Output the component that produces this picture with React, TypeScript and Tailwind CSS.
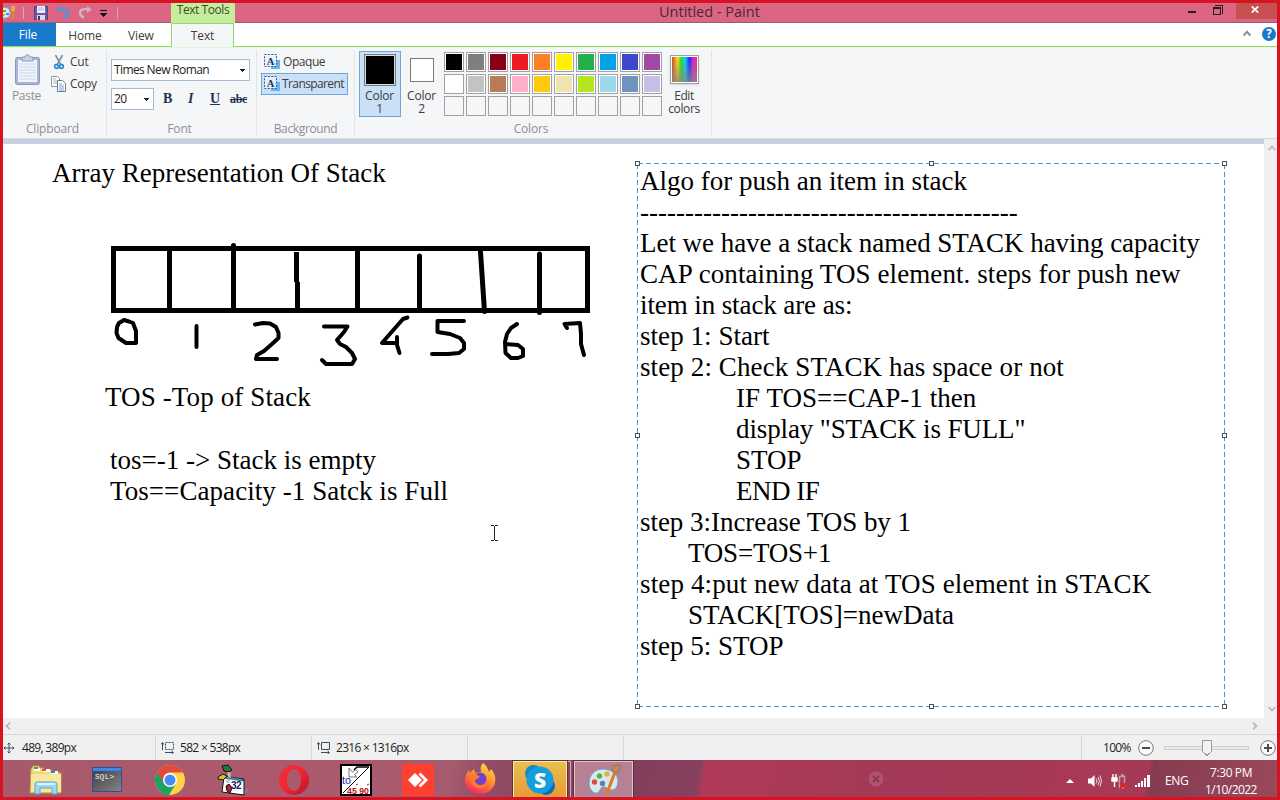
import React from 'react';

const UI = "font-['Open_Sans','Noto_Sans',sans-serif]";
const SERIF = "font-['Liberation_Serif',serif]";

function Caret({ className = '' }: { className?: string }) {
  return (
    <svg className={className} width="5" height="3" viewBox="0 0 5 3" shapeRendering="crispEdges">
      <path d="M0 0h5v1H4v1H3v1H2V2H1V1H0z" fill="#1e1e1e" />
    </svg>
  );
}

function PaletteIcon({ size }: { size: number }) {
  return (
    <svg width={size} height={size} viewBox="0 0 34 34">
      <path d="M16 6C8 6 2 12 2 20c0 7 5 11 8 10 4-1 2-5 6-6 3-1 4 3 8 3 5 0 7-4 7-9C31 11 24 6 16 6z" fill="#d5e8f3" stroke="#6f9dbb" />
      <circle cx="7.500" cy="19" r="2.700" fill="#d84c3c" />
      <circle cx="12.500" cy="13" r="2.700" fill="#62ae3b" />
      <circle cx="20" cy="11" r="2.700" fill="#e2b23c" />
      <circle cx="15.500" cy="20.500" r="2.700" fill="#647f9c" />
      <path d="M28 9L20 30" stroke="#df7d24" strokeWidth="3.200" strokeLinecap="round" />
      <path d="M25 8l1-5 6-1 2 1-3 7z" fill="#b98a5a" stroke="#8c653e" strokeWidth=".6" />
    </svg>
  );
}

function SmallPaintIcon() {
  return (
    <svg width="16" height="16" viewBox="0 0 16 16">
      <path d="M0 3q6-2 9 1 3 4 0 8-3 2-9 1z" fill="#d5eaf5" stroke="#6aa5ca" />
      <path d="M3 5h3v2H3z" fill="#62ae3b" /><path d="M6 8h3v2H6z" fill="#4b8bd0" /><path d="M2 9h3v2H2z" fill="#e2b23c" />
      <path d="M13 5v9" stroke="#e28a2a" strokeWidth="2.500" /><path d="M11 1h4v5h-4z" fill="#e7a849" />
    </svg>
  );
}

function TitleBar() {
  return (
    <div className="relative flex h-5 shrink-0 border-b border-[#94606f] bg-[#dc6584]">
      <div className="flex w-[168px] items-center">
        <div className="-ml-[3px] w-[15px]"><SmallPaintIcon /></div>
        <div className="ml-2 h-3 w-px bg-[#c9b0b7]" />
        <svg className="ml-[10px]" width="14" height="14" viewBox="0 0 14 14">
          <path d="M.5.5h13v13h-13z" fill="#7354ad" stroke="#543e83" />
          <path d="M3 0h8v7H3z" fill="#eef0fa" />
          <path d="M4 2h6M4 4h6" stroke="#a9b7d5" />
          <path d="M3 9h8v5H3z" fill="#d7d9e5" />
          <path d="M4 10h2v4H4z" fill="#3e3567" />
        </svg>
        <svg className="ml-2" width="14" height="13" viewBox="0 0 14 13">
          <path d="M3.500 3.200H8q4 .3 4 3.800 0 3-4 4.500" fill="none" stroke="#3f9be2" strokeWidth="2.600" />
          <path d="M.3 3.300L5 0v7z" fill="#3f9be2" />
        </svg>
        <svg className="ml-2" width="14" height="13" viewBox="0 0 14 13">
          <path d="M10.500 3.200H6q-4 .3-4 3.800 0 3 4 4.500" fill="none" stroke="#cdb3c0" strokeWidth="2.600" />
          <path d="M13.700 3.300L9 0v7z" fill="#cdb3c0" />
        </svg>
        <svg className="ml-[8px] mt-[2px]" width="7" height="7" viewBox="0 0 7 7" shapeRendering="crispEdges">
          <path d="M0 0h7v1H0zM0 3h7L3.500 7z" fill="#1b1015" />
        </svg>
        <div className="ml-[10px] h-3 w-px bg-[#c9b0b7]" />
      </div>
      <div className="flex h-5 w-16 justify-center bg-[#c4ee9b] text-[12px] leading-[14px] tracking-[-0.450px] text-[#3b4a31]">
        <span className="whitespace-nowrap">Text Tools</span>
      </div>
      <div className="flex-1 pl-[424px] text-[14.500px] leading-[17px] text-[#4a2833]">
        <span className="whitespace-nowrap">Untitled - Paint</span>
      </div>
      <svg className="mt-[2px]" width="45" height="12" viewBox="0 0 45 12" shapeRendering="crispEdges">
        <path d="M0 6h8v2H0z" fill="#2b1a20" />
        <path d="M25.500 3.500h7v6h-7z" fill="none" stroke="#2b1a20" />
        <path d="M25 2h8v2h-8z" fill="#2b1a20" />
        <path d="M27 .5h7.500v8" fill="none" stroke="#2b1a20" />
      </svg>
      <div className="ml-[3px] flex h-4 w-[41px] items-start justify-center bg-[#c75050] pt-[3px]">
        <svg className="-ml-[3px]" width="8" height="7" viewBox="0 0 8 7">
          <path d="M.7.4l6.600 6.200M7.300.4L.7 6.600" stroke="#fff" strokeWidth="1.700" />
        </svg>
      </div>
    </div>
  );
}

function Tabs() {
  return (
    <div className="flex h-6 shrink-0 bg-white text-[12px] leading-[25px] tracking-[-0.150px] text-[#3d3d3d]">
      <div className="w-[53px] border-b border-[#92d96b] bg-[#1979ca] pr-[3px] text-center leading-[23px] text-white">File</div>
      <div className="w-[58px] border-b border-[#92d96b] text-center">Home</div>
      <div className="w-[57px] border-b border-[#92d96b] pl-[14px]">View</div>
      <div className="w-[63px] border-x border-t border-[#92d96b] bg-[#f5f6f7] text-center leading-[24px]">Text</div>
      <div className="flex flex-1 justify-end border-b border-[#92d96b]">
        <svg className="mr-[11px] mt-[7px]" width="8" height="7" viewBox="0 0 8 7"><path d="M.7 5.500L4 1.800l3.300 3.700" stroke="#8f8f8f" strokeWidth="1.900" fill="none" /></svg>
        <svg className="mr-[1px] mt-[4px]" width="14" height="14" viewBox="0 0 15 15">
          <circle cx="7.500" cy="7.500" r="7.500" fill="#1979ca" />
          <text x="7.500" y="12" textAnchor="middle" fontSize="12.500" fontWeight="700" fill="#fff">?</text>
        </svg>
      </div>
    </div>
  );
}

function GroupLabel({ children }: { children: React.ReactNode }) {
  return <div className="mt-auto text-center text-[12px] leading-[16px] tracking-[-0.150px] text-[#8c8f94]">{children}</div>;
}

function Separator() {
  return <div className="mt-[2px] h-[86px] w-px shrink-0 bg-[#e2e3e5]" />;
}

function TextBgIcon() {
  return (
    <svg width="16" height="16" viewBox="0 0 16 16">
      <path d="M7 6h9v9H7z" fill="#63b4f5" />
      <path d="M.5.5h12v12H.5z" fill="#e9f3fc" fillOpacity=".85" stroke="#2c5e92" strokeDasharray="2 1.400" />
      <text x="6.500" y="10.500" textAnchor="middle" fontSize="10.500" fontWeight="700" fill="#1d3557" className={SERIF}>A</text>
    </svg>
  );
}

const palette = [
  '#000000', '#7f7f7f', '#880015', '#ed1c24', '#ff7f27', '#fff200', '#22b14c', '#00a2e8', '#3f48cc', '#a349a4',
  '#ffffff', '#c3c3c3', '#b97a57', '#ffaec9', '#ffc90e', '#efe4b0', '#b5e61d', '#99d9ea', '#7092be', '#c8bfe7',
  '', '', '', '', '', '', '', '', '', '',
];

function Ribbon() {
  return (
    <div className="flex h-[92px] shrink-0 border-b border-t border-b-[#d9dadc] border-t-[#e4f6d8] bg-[#f5f6f7] text-[12px] tracking-[-0.200px] text-[#3c3c3c]">
      <div className="flex w-[103px] flex-col pb-[1px] pt-[3px]">
        <div className="flex">
          <div className="flex w-[47px] flex-col items-center pt-[3px]">
            <svg className="ml-[2px]" width="25" height="31" viewBox="0 0 25 31">
              <rect x=".5" y="3.500" width="24" height="27" rx="2" fill="#a8b6d2" stroke="#8b9bbb" />
              <path d="M3 6h19v22H3z" fill="#f0f4fb" />
              <path d="M4 10h17M4 13h17M4 16h17M4 19h17M4 22h17M4 25h17" stroke="#cdd8ea" />
              <path d="M7 7V3h3c0-3 5-3 5 0h3v4z" fill="#c8d1e3" stroke="#8b9bbb" />
            </svg>
            <div className="mt-[3px] leading-[16px] tracking-[-0.300px] text-[#8c8f94]">Paste</div>
          </div>
          <div className="flex flex-col">
            <div className="flex h-[22px] items-center">
              <svg className="ml-[4px]" width="10" height="15" viewBox="0 0 10 15">
                <path d="M1.500 0L7 10M8.500 0L3 10" stroke="#7890a9" strokeWidth="1.600" />
                <circle cx="2.500" cy="11.500" r="1.900" fill="none" stroke="#2587d0" strokeWidth="1.600" />
                <circle cx="7.500" cy="11.500" r="1.900" fill="none" stroke="#2587d0" strokeWidth="1.600" />
              </svg>
              <span className="ml-[6px]">Cut</span>
            </div>
            <div className="flex h-[22px] items-center">
              <svg className="ml-[1px]" width="15" height="16" viewBox="0 0 15 16">
                <path d="M.5.500h6l2 2v8h-8z" fill="#fff" stroke="#8e99a6" />
                <path d="M2 3h3M2 5h4M2 7h4" stroke="#a7b3c3" />
                <path d="M6.500 4.500h5l3 3v8h-8z" fill="#fff" stroke="#6e7d8f" />
                <path d="M8 8h3M8 10h5M8 12h5M8 14h5" stroke="#7ba3cd" />
              </svg>
              <span className="ml-[4px] tracking-[-0.400px]">Copy</span>
            </div>
          </div>
        </div>
        <GroupLabel><span className="relative -left-[2px]">Clipboard</span></GroupLabel>
      </div>
      <Separator />
      <div className="flex w-[149px] flex-col pb-[1px] pl-1 pt-[11px]">
        <div className="flex h-[22px] w-[139px] items-center justify-between border border-[#a5b9d6] bg-white pl-[2px] pr-[4px] text-[#222]">
          <span className="whitespace-nowrap tracking-[-0.620px]">Times New Roman</span><Caret />
        </div>
        <div className="mt-[7px] flex items-center">
          <div className="flex h-[22px] w-[43px] items-center justify-between border border-[#a5b9d6] bg-white pl-[2px] pr-[4px] text-[#222]">
            <span className="tracking-[-0.500px]">20</span><Caret />
          </div>
          <div className={`flex text-[14px] leading-[16px] tracking-normal text-[#1f3552] ${SERIF}`}>
            <span className="ml-[9px] w-[23px] font-bold">B</span>
            <span className="w-[23px] pl-[2px] font-bold italic">I</span>
            <span className="w-[20px] pl-[1px] font-bold underline">U</span>
            <span className="pl-[1px] text-[12px] font-bold tracking-[-0.300px] line-through">abc</span>
          </div>
        </div>
        <GroupLabel><span className="relative -left-[4px]">Font</span></GroupLabel>
      </div>
      <Separator />
      <div className="flex w-[97px] flex-col pb-[1px] pl-1 pt-[3px]">
        <div className="flex h-[22px] w-[87px] items-center gap-[3px] border border-transparent pl-[2px]"><TextBgIcon /><span className="tracking-[-0.450px]">Opaque</span></div>
        <div className="flex h-[22px] w-[87px] items-center gap-[2px] border border-[#6ea6da] bg-[#c9e0f7] pl-[2px]"><TextBgIcon /><span className="tracking-[-0.600px]">Transparent</span></div>
        <GroupLabel><span className="relative -left-[2px] tracking-[-0.350px]">Background</span></GroupLabel>
      </div>
      <Separator />
      <div className="flex w-[356px] flex-col pb-[1px] pl-1 pt-[3px]">
        <div className="flex items-start">
          <div className="flex h-[66px] w-[42px] flex-col items-center border border-[#6ea6da] bg-[#c9e0f7] pt-[2px]">
            <div className="h-8 w-8 border border-[#7a7a7a] bg-[#c9e0f7] p-px"><div className="h-full w-full bg-black" /></div>
            <div className="mt-[3px] pr-[1px] text-center leading-[13px]">Color<br />1</div>
          </div>
          <div className="flex h-[66px] w-[41px] flex-col items-center pt-[7px]">
            <div className="h-6 w-6 border border-[#7a7a7a] bg-white" />
            <div className="mt-[7px] text-center leading-[13px]">Color<br />2</div>
          </div>
          <div className="ml-[2px] mt-[1px] grid grid-cols-10 gap-[2px]">
            {palette.map((c, i) => (
              <div key={i} className={c ? 'h-5 w-5 border border-[#a0a0a0] bg-white p-px' : 'h-5 w-5 border border-[#a0a0a0]'}>
                <div className="h-4 w-4" style={{ backgroundColor: c || 'transparent' }} />
              </div>
            ))}
          </div>
          <div className="ml-[2px] flex w-10 flex-col items-center pt-[4px]">
            <div className="h-[29px] w-[29px] border border-[#a0a0a0] bg-white p-px shadow-sm">
              <div className="h-full w-full bg-[linear-gradient(to_bottom,transparent,#888c),linear-gradient(90deg,#d84030,#ffe000_22%,#20e020_38%,#00dfff_52%,#2020ff_70%,#e020e0_86%,#ff2060)]" />
            </div>
            <div className="mt-[5px] text-center leading-[13px] tracking-[-0.400px]">Edit<br />colors</div>
          </div>
        </div>
        <GroupLabel><span className="relative -left-[4px]">Colors</span></GroupLabel>
      </div>
      <Separator />
    </div>
  );
}

const algo: [number, string, number][] = [
  [0, 'Algo for push an item in stack', 0],
  [0, '------------------------------------------', 0],
  [0, 'Let we have a stack named STACK having capacity', -0.04],
  [0, 'CAP containing TOS element. steps for push new', 0.09],
  [0, 'item in stack are as:', -0.1],
  [0, 'step 1: Start', 0.05],
  [0, 'step 2: Check STACK has space or not', 0.11],
  [96, 'IF TOS==CAP-1 then', 0.05],
  [96, 'display "STACK is FULL"', -0.12],
  [96, 'STOP', 0],
  [96, 'END IF', -0.5],
  [0, 'step 3:Increase TOS by 1', -0.04],
  [48, 'TOS=TOS+1', -0.2],
  [0, 'step 4:put new data at TOS element in STACK', 0.14],
  [48, 'STACK[TOS]=newData', 0],
  [0, 'step 5: STOP', 0],
];

const handles = [[637, 163], [931, 163], [1224, 163], [637, 435], [1224, 435], [637, 706], [931, 706], [1224, 706]];

function Canvas() {
  return (
    <div className={`relative h-[574px] w-[1261px] overflow-hidden bg-white text-[27px] leading-[31px] text-black ${SERIF}`}>
      <svg className="absolute left-0 top-0" width="1261" height="574" viewBox="3 144 1261 574" fill="none">
        <g stroke="#000" strokeWidth="5" shapeRendering="crispEdges">
          <path d="M113.500 248.500H587.500V310.500H113.500z" />
          <path d="M169.500 248V310M233.500 248V310M357.500 248V310M296.500 252V282M297.500 282V310" />
        </g>
        <g stroke="#000" strokeWidth="5" strokeLinecap="round">
          <path d="M233.500 245.500V250M419.500 256V310M480.500 252L484.500 311.500M539.500 254V312.500" />
        </g>
        <g stroke="#000" strokeWidth="4" strokeLinecap="round" strokeLinejoin="round">
          <path d="M124 320L119 323L117 327L116.500 333L118.500 338L126 343L136 343V331L133 323L129 321.500L124 320" />
          <path d="M196.500 326V347" />
          <path d="M255 324.500L263 323L270 323.500L276 327L278.500 333V338L272 344L264 351L257 355L256 359H277" />
          <path d="M324 326.500H347.500L344 332L337 340L340 344L346 347L352 353L355 359L352 364H326L322 360" />
          <path d="M407.500 317.500L403 319L396 327L389 335L382 343H397M397 337V345L399.500 353" />
          <path d="M464 321H437.500V332L450 334L460 338L464 343V349L459 353L448 354H432" />
          <path d="M517 324L511 328L507 334L505 342L505.500 353L511 358L518 358L523 356V349L518 345L506 344" />
          <path d="M567 328L564.500 324L580 323L581 334V344L584 355" />
        </g>
        <path d="M637.500 163.500H1224.500M637.500 706.500H1224.500M637.500 163.500V706M1224.500 163.500V706" stroke="#4793c7" strokeDasharray="5 3" shapeRendering="crispEdges" />
        <g stroke="#505050" fill="#fff" shapeRendering="crispEdges">
          {handles.map(([x, y]) => <rect key={`${x}-${y}`} x={x - 1.5} y={y - 1.5} width="4" height="4" />)}
        </g>
        <path d="M491 525.500h3M495 525.500h3M491 540.500h3M495 540.500h3M494.500 526V540" stroke="#222" shapeRendering="crispEdges" />
      </svg>
      <div className="absolute left-[49px] top-[14px] whitespace-pre">Array Representation Of Stack</div>
      <div className="absolute left-[102px] top-[238px] whitespace-pre tracking-[0.120px]">TOS -Top of Stack</div>
      <div className="absolute left-[107px] top-[301px] whitespace-pre">tos=-1 -&gt; Stack is empty<br /><span className="tracking-[0.070px]">Tos==Capacity -1 Satck is Full</span></div>
      <div className="absolute left-[637px] top-[22px] whitespace-pre">
        {algo.map(([indent, line, tracking], i) => <div key={i} style={{ paddingLeft: indent, letterSpacing: tracking }}>{line}</div>)}
      </div>
    </div>
  );
}

function Chevron({ d, className = '' }: { d: string; className?: string }) {
  return <svg className={className} width="8" height="8" viewBox="0 0 8 8"><path d={d} stroke="#b9b9b9" strokeWidth="1.800" fill="none" /></svg>;
}

function StatusBar() {
  return (
    <div className="flex h-[26px] shrink-0 items-center border-t border-[#d7d7d7] bg-[#f0f0f0] text-[12px] tracking-[-0.700px] text-[#1e1e1e]">
      <div className="flex h-6 w-[153px] items-center border-r border-[#d7d7d7]">
        <svg width="12" height="12" viewBox="0 0 12 12"><path d="M6 1v10M1 6h10M4.500 2.500L6 1l1.500 1.500M4.500 9.500L6 11l1.500-1.500M2.500 4.500L1 6l1.500 1.500M9.500 4.500L11 6 9.500 7.500" stroke="#3c4c66" fill="none" /></svg>
        <span className="ml-[7px] pt-[1px]">489, 389px</span>
      </div>
      <div className="flex h-6 w-[156px] items-center border-r border-[#d7d7d7]">
        <SizeIcon dashed /><span className="ml-[6px] pt-[1px]">582 × 538px</span>
      </div>
      <div className="flex h-6 w-[156px] items-center border-r border-[#d7d7d7]">
        <SizeIcon /><span className="ml-[6px] pt-[1px]">2316 × 1316px</span>
      </div>
      <div className="h-6 w-[156px] border-r border-[#d7d7d7]" />
      <div className="h-6 flex-1 border-r border-[#d7d7d7]" />
      <div className="flex h-6 w-[195px] items-center pl-[21px]">
        <span className="w-[35px] whitespace-nowrap pt-[1px]">100%</span>
        <ZoomButton />
        <svg className="ml-[10px]" width="86" height="18" viewBox="0 0 86 18" shapeRendering="crispEdges">
          <path d="M.5 7.500h84v3H.5z" fill="#e9eaea" stroke="#d0d0d0" />
          <path d="M38.500 1.500h9v11l-4.500 4-4.500-4z" fill="#f3f3f3" stroke="#9b9b9b" />
        </svg>
        <div className="ml-[10px]"><ZoomButton plus /></div>
      </div>
    </div>
  );
}

function SizeIcon({ dashed = false }: { dashed?: boolean }) {
  return (
    <svg className="ml-[5px]" width="13" height="13" viewBox="0 0 13 13" fill="none" stroke="#3b4c66">
      <path d="M4.500 1.500h8v7h-8z" strokeDasharray={dashed ? '2 1' : undefined} />
      <path d="M1.500 2v7M0 3.500L1.500 1.500 3 3.500M4 11.500h8M10.500 10l2 1.500-2 1.500" />
    </svg>
  );
}

function ZoomButton({ plus = false }: { plus?: boolean }) {
  return (
    <svg width="16" height="16" viewBox="0 0 16 16">
      <circle cx="8" cy="8" r="7.300" fill="#fafafa" stroke="#777" />
      <path d={plus ? 'M4 8h8M8 4v8' : 'M4 8h8'} stroke="#4c4c4c" strokeWidth="2" />
    </svg>
  );
}

function FolderIcon() {
  return (
    <svg width="34" height="32" viewBox="0 0 34 32">
      <path d="M2 5l2-3h6l1 2h3l2 2h6l2 2 8 1v20H1z" fill="#f1d879" stroke="#c59b3a" />
      <path d="M5 4h6v3H5zM14 5h7v3h-7zM22 7h7v3h-7z" fill="#fff" />
      <path d="M5 3h4v2H5z" fill="#27b34b" /><path d="M13 5h4v2h-4z" fill="#df523a" /><path d="M22 7h4v2h-4z" fill="#2a85d5" />
      <path d="M2 10h30v18H2z" fill="#f8e89e" />
      <path d="M6 30V21c0-3 1-3 4-3h14c3 0 4 0 4 3v9h-5v-6H11v6z" fill="#9bd6f2" stroke="#58a7d0" />
      <path d="M8 20h18" stroke="#dff4fd" strokeWidth="2" />
    </svg>
  );
}

function SqlIcon() {
  return (
    <svg width="30" height="26" viewBox="0 0 30 26">
      <defs><linearGradient id="sql" x2="1" y2="1"><stop stopColor="#3c3c3c" /><stop offset="1" stopColor="#858585" /></linearGradient></defs>
      <path d="M.5.500h29v24H.5z" fill="url(#sql)" stroke="#304d9c" />
      <path d="M1 1h28v3H1z" fill="#3a87ee" />
      <text x="3" y="12" fontSize="7.500" textLength="19" fill="#fff" className="font-['Liberation_Mono',monospace]">SQL&gt;</text>
    </svg>
  );
}

function ChromeIcon() {
  return (
    <svg width="30" height="30" viewBox="0 0 30 30">
      <circle cx="15" cy="15" r="15" fill="#ffd348" />
      <path d="M15 15L2 7.500A15 15 0 0 0 14 30L21 18.500z" fill="#1ca261" />
      <path d="M2 7.500A15 15 0 0 1 28 7.500H15a7.500 7.500 0 0 0-6.500 11.200z" fill="#e14b3d" />
      <circle cx="15" cy="15" r="7" fill="#fff" /><circle cx="15" cy="15" r="5.500" fill="#4a8af4" />
    </svg>
  );
}

function CalcIcon() {
  return (
    <svg width="32" height="32" viewBox="0 0 32 32">
      <path d="M25 26l7-1-3 4-6 1z" fill="#8c7d85" />
      <path d="M7 13l20 2v16L5 28z" fill="#fff" stroke="#111" />
      <path d="M7 12l19 3v2L7 14z" fill="#2cb9bb" stroke="#111" strokeWidth=".6" />
      <path d="M5 2l6-1 4 5-3 2-5-1z" fill="#207c33" stroke="#111" />
      <path d="M1 13l5-3 4 2-4 4-5-1z" fill="#d6c333" stroke="#111" />
      <path d="M11 8l1 5M13 8v6" stroke="#fff" strokeWidth=".8" />
      <circle cx="11" cy="17" r="2" fill="#c5c5c5" />
      <path d="M9 22l3-2 3 4-2 5-3-2z" fill="#b91f28" stroke="#111" />
      <text x="14" y="25" fontSize="10" fontWeight="700" fill="#191970" className="font-['Liberation_Sans',sans-serif] tracking-[-0.500px]">32</text>
    </svg>
  );
}

function OperaIcon() {
  return (
    <svg width="30" height="30" viewBox="0 0 30 30">
      <defs><linearGradient id="op" y2="1" x2="1"><stop stopColor="#f52d36" /><stop offset=".5" stopColor="#ef2633" /><stop offset="1" stopColor="#b31427" /></linearGradient></defs>
      <path d="M15 0a15 15 0 1 0 0 30 15 15 0 1 0 0-30m0 4c4 0 7 5 7 11s-3 11-7 11-7-5-7-11 3-11 7-11" fill="url(#op)" fillRule="evenodd" />
    </svg>
  );
}

function ConvertIcon() {
  return (
    <svg width="32" height="32" viewBox="0 0 32 32">
      <path d="M1 1h30v30H1z" fill="#fff" stroke="#000" strokeWidth="2" />
      <path d="M3 29L29 3" stroke="#000" />
      <path d="M14 6l3-3h12" fill="none" stroke="#000" strokeWidth="1.500" />
      <path d="M9 4v9h8l-2.500-2.500L18 8l-2-2.500-3.500 2.500z" fill="#fff" stroke="#777" />
      <text x="2" y="20" fontSize="11" fill="#1b1ba8" textLength="9" lengthAdjust="spacingAndGlyphs" className="font-['Liberation_Sans',sans-serif] tracking-normal">to</text>
      <text x="7" y="29.500" fontSize="9" fontWeight="700" fill="#bd1322" textLength="22" lengthAdjust="spacingAndGlyphs" className="font-['Liberation_Sans',sans-serif]">45 90</text>
      <path d="M16 21l2-1M27 21l2-1" stroke="#bd1322" />
    </svg>
  );
}

function AnyDeskIcon() {
  return (
    <svg width="32" height="32" viewBox="0 0 32 32">
      <path d="M0 0h32v32H0z" fill="#ff4031" />
      <path d="M6 16l7-7 7 7-7 7z" fill="#fff" />
      <path d="M16.500 10.500L18.500 8.500 26 16l-7.500 7.500-2-2L22 16z" fill="#fff" />
    </svg>
  );
}

function FirefoxIcon() {
  return (
    <svg width="32" height="32" viewBox="0 0 32 32">
      <defs><linearGradient id="ff" x1=".8" x2=".3" y2="1"><stop stopColor="#ffe14a" /><stop offset=".45" stopColor="#ff922d" /><stop offset="1" stopColor="#f52561" /></linearGradient></defs>
      <path d="M19 0c5 4 5 7 6 9l2-3c4 5 5 9 4 14-2 7-8 11-15 11S2 27 1 19c-.4-4 1-8 4-12l1 3 4-4 1 4 6-1c-1-4 0-7 2-9z" fill="url(#ff)" />
      <circle cx="16" cy="16" r="6.500" fill="#6e45c8" />
      <path d="M4 10l8 1 4 3-3 2-2 1c0 6 10 7 13 1-1 6-6 8-10 7-6-1-9-6-10-15z" fill="#ff7a2c" />
    </svg>
  );
}

function SkypeIcon() {
  return (
    <svg width="30" height="30" viewBox="0 0 30 30">
      <circle cx="8.500" cy="8.500" r="8.500" fill="#1489cf" /><circle cx="21" cy="21" r="9" fill="#0870b8" />
      <circle cx="15" cy="15" r="13.500" fill="#159dde" />
      <text x="15" y="22.500" textAnchor="middle" fontSize="21" fontWeight="800" fill="#fff">S</text>
    </svg>
  );
}

function Taskbar() {
  const slot = 'flex h-[37px] w-[62px] shrink-0 items-center justify-center pt-[3px]';
  return (
    <div className="relative flex h-[37px] shrink-0 overflow-hidden bg-[linear-gradient(100deg,#a65a6c_0%,#ad596d_22%,#a75b6e_35%,#914d63_38%,#823e5c_49%,#87415e_54.500%,#b03a58_55%,#a23956_70%,#a83957_85%,#a63956_89.500%,#873b50_90%,#984a5a_100%)] pl-3">
      <div className={slot}><FolderIcon /></div>
      <div className={slot}><span className="-ml-[2px]"><SqlIcon /></span></div>
      <div className={slot}><ChromeIcon /></div>
      <div className={slot}><span className="ml-[1px]"><CalcIcon /></span></div>
      <div className={slot}><OperaIcon /></div>
      <div className={slot}><ConvertIcon /></div>
      <div className={slot}><AnyDeskIcon /></div>
      <div className="flex h-[37px] w-[62px] shrink-0 items-center justify-center pt-[1px]"><FirefoxIcon /></div>
      <div className="flex w-[63px] pl-[2px]">
        <div className="mt-px flex h-9 w-[54px] items-center justify-center border border-b-0 border-[#ffe9ad] bg-[linear-gradient(#e9bf4d,#e99a39)] outline outline-1 outline-[#58313d]"><SkypeIcon /></div>
        <div className="ml-[1px] mt-px h-9 w-[3px] border-r border-t border-[#d5aab8]" />
      </div>
      <div className="mt-px flex h-9 w-[59px] items-center justify-center border border-b-0 border-[#e0c2cc] bg-[linear-gradient(#b87f93,#b58496)] outline outline-1 outline-[#583044]"><PaletteIcon size={34} /></div>
      <div className="flex flex-1 items-center">
        <svg className="ml-[235px] opacity-40" width="16" height="16" viewBox="0 0 16 16"><circle cx="8" cy="8" r="7.500" fill="#bd8093" /><path d="M5 5l6 6M11 5l-6 6" stroke="#73344b" strokeWidth="2" /></svg>
      </div>
      <div className="flex w-[216px] items-center text-[12px] tracking-[-0.400px] text-white">
        <svg className="ml-[5px] mt-1" width="8" height="5" viewBox="0 0 8 5"><path d="M0 5l4-4 4 4z" fill="#fff" /></svg>
        <svg className="ml-[13px] mt-1" width="15" height="14" viewBox="0 0 15 14"><path d="M1 4.500h3L7.500 1v12L4 9.500H1z" fill="#fff" /><path d="M9 4.500q2 2.500 0 5M11 3q3 4 0 8M13 1.500q3 5.500 0 11" stroke="#e8d9dd" fill="none" /></svg>
        <svg className="ml-[9px] mt-1" width="16" height="16" viewBox="0 0 16 16"><path d="M2 1v4M5 1v4M1 5h5v3H1zM3.500 8v6" stroke="#fff" strokeWidth="1.400" fill="#fff" /><path d="M8.500 3.500h5v11h-5zM10 2h3" stroke="#b9a2a8" fill="none" strokeWidth="1.500" /><path d="M9 10l6 5M15 10l-6 5" stroke="#d91d23" strokeWidth="2" /></svg>
        <svg className="ml-[8px] mt-1" width="16" height="12" viewBox="0 0 16 12" fill="#fff"><path d="M0 10h2v2H0zM3 8h2v4H3zM6 6h2v6H6zM9 3h2v9H9zM12 0h3v12h-3z" /></svg>
        <span className="ml-[14px] mt-[4px] w-6">ENG</span>
        <div className="ml-[11px] mt-[4px] w-[62px] text-center leading-[17px]"><div>7:30 PM</div><div className="tracking-[-0.550px]">1/10/2022</div></div>
      </div>
    </div>
  );
}

export default function App() {
  return (
    <div className={`flex h-[800px] w-[1280px] flex-col overflow-hidden border-[3px] border-[#d71322] bg-white ${UI}`}>
      <TitleBar />
      <Tabs />
      <Ribbon />
      <div className="flex h-[579px] shrink-0">
        <div className="flex w-[1261px] flex-col">
          <div className="h-[5px] shrink-0 bg-[#c8d1e1]" />
          <Canvas />
        </div>
        <div className="flex flex-1 flex-col items-center justify-between bg-[#f0f0f0] pb-[5px] pl-[2px] pt-[5px]">
          <Chevron d="M.7 6L4 2.500 7.300 6" /><Chevron d="M.7 2L4 5.500 7.300 2" />
        </div>
      </div>
      <div className="flex h-4 shrink-0 items-center justify-between bg-[#f0f0f0] pl-[1px] pr-[18px]">
        <Chevron d="M6 .7L2.500 4 6 7.300" /><Chevron d="M2 .7L5.500 4 2 7.300" />
      </div>
      <StatusBar />
      <Taskbar />
    </div>
  );
}
